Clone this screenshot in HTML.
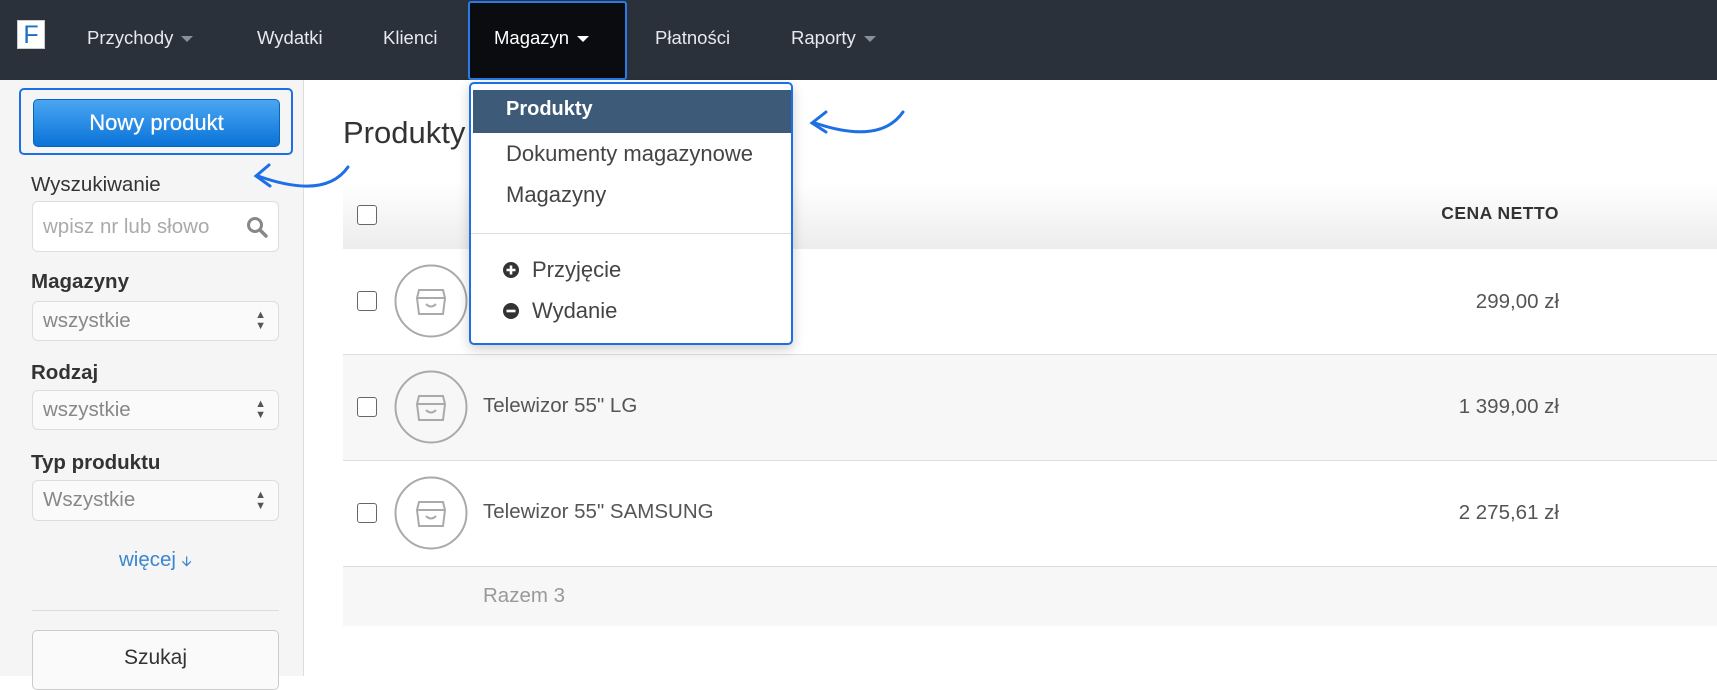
<!DOCTYPE html>
<html><head><meta charset="utf-8"><style>
*{box-sizing:border-box;margin:0;padding:0}
body{width:1717px;height:676px;overflow:hidden;background:#fff;font-family:"Liberation Sans",sans-serif;position:relative;color:#555}
.a{position:absolute}
.nav{left:0;top:0;width:1717px;height:80px;background:#2a313b}
.ni{position:absolute;top:0;height:80px;line-height:76px;color:#e6e9ee;font-size:18.5px}
.caret{display:inline-block;width:0;height:0;border-left:6px solid transparent;border-right:6px solid transparent;border-top:6px solid #8a9098;vertical-align:middle;margin-left:8px}
.side{left:0;top:80px;width:304px;height:596px;background:#f5f5f5;border-right:1px solid #ddd}
.lbl{position:absolute;left:31px;font-size:20.5px;color:#333}
.sel{position:absolute;left:32px;width:247px;border:1px solid #ddd;border-radius:6px;background:#fafafa;color:#888;font-size:20.5px;padding-left:10px}
.ud{position:absolute;right:12px;top:50%;transform:translateY(-50%);font-size:11px;line-height:11px;color:#555}
.cb{position:absolute;width:20px;height:20px;border:1.5px solid #666;border-radius:3px;background:#fff}
.name{position:absolute;left:483px;font-size:20.5px;color:#555}
.price{position:absolute;right:158px;font-size:20.5px;color:#555}
.dd{left:469px;top:82px;width:324px;height:263px;border:2px solid #1d6fe5;border-radius:5px;background:#fff;box-shadow:0 4px 12px rgba(0,0,0,.2)}
.di{position:absolute;left:35px;font-size:22px;color:#444}
</style></head><body>
<div class="a nav"></div>
<div class="a" style="left:17px;top:20px;width:28px;height:29px;background:#fff;border:1px solid #ccc;color:#1c6fc2;font-size:25px;line-height:29px;text-align:center">F</div>
<div class="ni" style="left:87px">Przychody<span class="caret"></span></div>
<div class="ni" style="left:257px">Wydatki</div>
<div class="ni" style="left:383px">Klienci</div>
<div class="a" style="left:468px;top:1px;width:159px;height:79px;background:#0a0c0f;border:2px solid #2a7be8;border-radius:3px"></div>
<div class="ni" style="left:494px;color:#fff">Magazyn<span class="caret" style="border-top-color:#fff"></span></div>
<div class="ni" style="left:655px">Płatności</div>
<div class="ni" style="left:791px">Raporty<span class="caret"></span></div>

<div class="a side"></div>
<div class="a" style="left:19px;top:88px;width:274px;height:67px;border:2px solid #1d6fe5;border-radius:5px"></div>
<div class="a" style="left:33px;top:99px;width:247px;height:48px;border-radius:5px;background:linear-gradient(#4aa6f2,#0a73d8);border:1px solid #0b63b8;color:#fff;font-size:22px;text-align:center;line-height:46px;text-shadow:0 0 0.6px #fff">Nowy produkt</div>
<div class="lbl" style="top:173px">Wyszukiwanie</div>
<div class="sel" style="top:201px;height:51px;line-height:49px;background:#fff;color:#aaa">wpisz nr lub słowo
<svg style="position:absolute;right:10px;top:14px" width="22" height="22" viewBox="0 0 22 22"><circle cx="9" cy="9" r="6.5" fill="none" stroke="#888" stroke-width="3"/><line x1="14" y1="14" x2="20" y2="20" stroke="#888" stroke-width="3.5" stroke-linecap="round"/></svg></div>
<div class="lbl" style="top:270px;font-weight:bold">Magazyny</div>
<div class="sel" style="top:301px;height:40px;line-height:38px">wszystkie<span class="ud">▲<br>▼</span></div>
<div class="lbl" style="top:361px;font-weight:bold">Rodzaj</div>
<div class="sel" style="top:390px;height:40px;line-height:38px">wszystkie<span class="ud">▲<br>▼</span></div>
<div class="lbl" style="top:451px;font-weight:bold">Typ produktu</div>
<div class="sel" style="top:480px;height:41px;line-height:38px">Wszystkie<span class="ud">▲<br>▼</span></div>
<div class="a" style="left:119px;top:548px;color:#3a86d0;font-size:20.5px">więcej <span style="font-size:14px">🡫</span></div>
<div class="a" style="left:32px;top:610px;width:247px;height:1px;background:#ddd"></div>
<div class="a" style="left:32px;top:630px;width:247px;height:60px;border:1px solid #ccc;border-radius:5px;background:#fafafa;text-align:center;line-height:54px;font-size:21px;color:#333">Szukaj</div>

<div class="a" style="left:343px;top:115px;font-size:31px;color:#333">Produkty</div>
<div class="a" style="left:343px;top:183px;width:1374px;height:66px;background:linear-gradient(#fff,#ececec)"></div>
<div class="cb" style="left:357px;top:205px"></div>
<div class="a" style="right:158px;top:203px;font-size:17.5px;font-weight:bold;color:#333;letter-spacing:.5px">CENA NETTO</div>

<div class="a" style="left:343px;top:249px;width:1374px;height:106px;background:#fff;border-bottom:1px solid #ddd"></div>
<div class="a" style="left:343px;top:355px;width:1374px;height:106px;background:#f7f7f7;border-bottom:1px solid #ddd"></div>
<div class="a" style="left:343px;top:461px;width:1374px;height:106px;background:#fff;border-bottom:1px solid #ddd"></div>
<div class="a" style="left:343px;top:567px;width:1374px;height:59px;background:#f7f7f7"></div>

<div class="cb" style="left:357px;top:291px"></div>
<div class="cb" style="left:357px;top:397px"></div>
<div class="cb" style="left:357px;top:503px"></div>
<svg class="a" style="left:393px;top:264px" width="76" height="300" viewBox="0 0 76 300">
<g fill="none" stroke="#aaa" stroke-width="2">
<circle cx="38" cy="37" r="35.5"/><circle cx="38" cy="143" r="35.5"/><circle cx="38" cy="249" r="35.5"/>
<path d="M26 26 L50 26 L52 34 L50 50 L26 50 L24 34 Z M24 34 L52 34 M33 40 Q38 45 43 40"/>
<path transform="translate(0,106)" d="M26 26 L50 26 L52 34 L50 50 L26 50 L24 34 Z M24 34 L52 34 M33 40 Q38 45 43 40"/>
<path transform="translate(0,212)" d="M26 26 L50 26 L52 34 L50 50 L26 50 L24 34 Z M24 34 L52 34 M33 40 Q38 45 43 40"/>
</g></svg>
<div class="name" style="top:394px">Telewizor 55" LG</div>
<div class="name" style="top:500px">Telewizor 55" SAMSUNG</div>
<div class="price" style="top:290px">299,00 zł</div>
<div class="price" style="top:395px">1 399,00 zł</div>
<div class="price" style="top:501px">2 275,61 zł</div>
<div class="a" style="left:483px;top:584px;font-size:20.5px;color:#999">Razem 3</div>

<div class="a dd">
<div class="a" style="left:2px;top:6px;width:318px;height:43px;background:#3d5a78"></div>
<div class="di" style="top:14px;color:#fff;font-weight:bold;font-size:20px">Produkty</div>
<div class="di" style="top:57px">Dokumenty magazynowe</div>
<div class="di" style="top:98px">Magazyny</div>
<div class="a" style="left:0;top:149px;width:320px;height:1px;background:#ddd"></div>
<svg class="a" style="left:31px;top:177px" width="18" height="60" viewBox="0 0 18 60"><circle cx="9" cy="9" r="8" fill="#333"/><path d="M9 4.5v9M4.5 9h9" stroke="#fff" stroke-width="2.6"/><circle cx="9" cy="50" r="8" fill="#333"/><path d="M4.5 50h9" stroke="#fff" stroke-width="2.6"/></svg>
<div class="di" style="left:61px;top:173px">Przyjęcie</div>
<div class="di" style="left:61px;top:214px">Wydanie</div>
</div>

<svg class="a" style="left:0;top:0" width="1717" height="676">
<g fill="none" stroke="#1d6fe5" stroke-width="3" stroke-linecap="round">
<path d="M903 112 Q880 145 815 123"/><path d="M826 112 L812 123 L826 132"/>
<path d="M348 167 Q325 200 258 176"/><path d="M269 165 L256 176 L270 186"/>
</g></svg>
</body></html>
